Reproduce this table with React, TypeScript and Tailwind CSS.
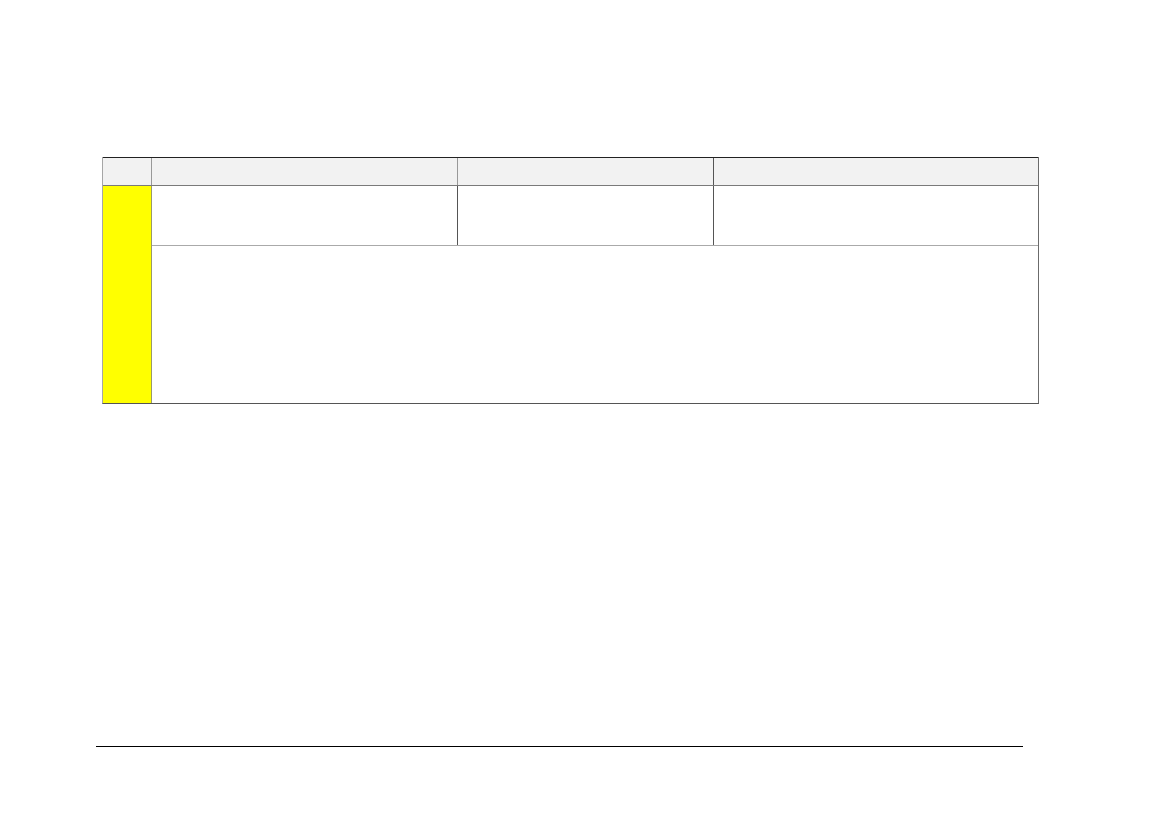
const App = () => {
  return (
    <div className="min-h-[827px] w-[1169px] bg-white pt-[157px]">
      <div className="ml-[102px] w-[937px] border-b border-l border-r border-b-[#555] border-l-[#a6a6a6] border-r-[#6b6b6b]">
        <div className="flex h-[29px] border-b border-t border-b-[#7a7a7a] border-t-[#222] bg-[#f2f2f2]">
          <div className="w-[49px] border-r border-r-[#999]" />
          <div className="w-[306px] border-r border-r-[#999]" />
          <div className="w-[256px] border-r border-r-[#555]" />
          <div className="flex-1" />
        </div>
        <div className="flex h-[217px]">
          <div className="w-[49px] border-r border-r-[#9a9a6a] bg-[#ffff00]" />
          <div className="flex flex-1 flex-col">
            <div className="flex h-[60px] border-b border-b-[#aaa]">
              <div className="w-[306px] border-r border-r-[#555]" />
              <div className="w-[256px] border-r border-r-[#555]" />
              <div className="flex-1" />
            </div>
            <div className="flex-1" />
          </div>
        </div>
      </div>
      <div className="ml-[96px] mt-[342px] h-px w-[927px] bg-black" />
    </div>
  );
};

export default App;
